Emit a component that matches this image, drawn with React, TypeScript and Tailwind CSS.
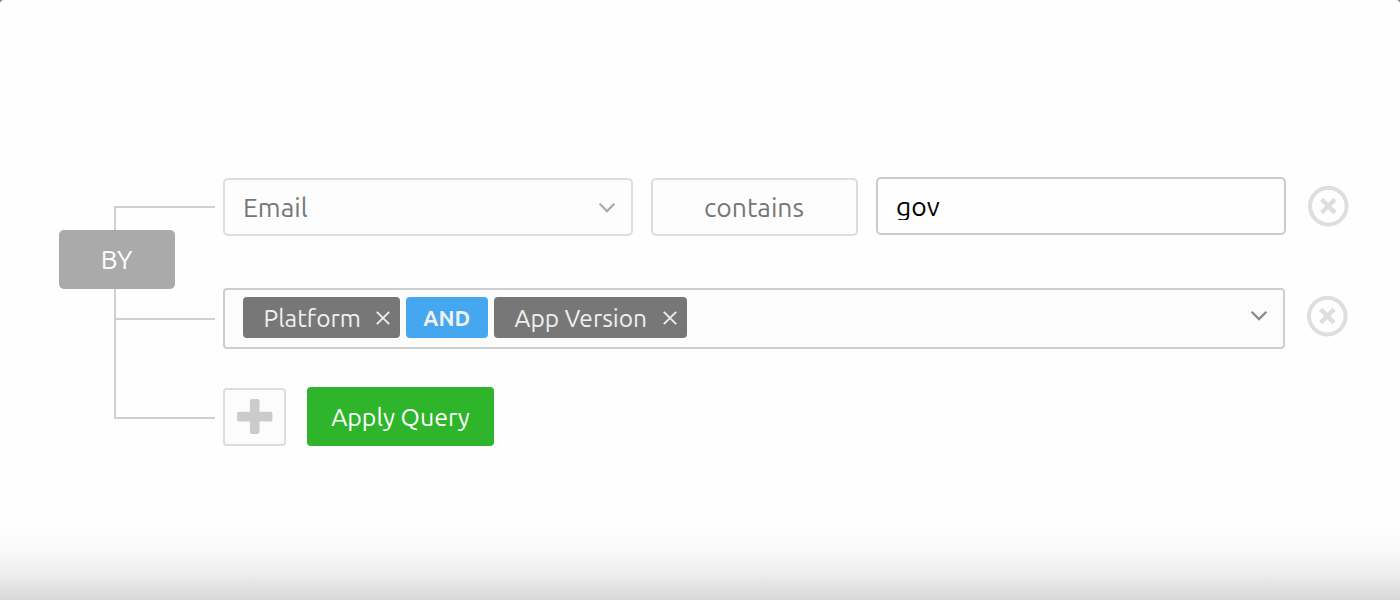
import { ReactNode } from "react";

function Chevron({ className }: { className: string }) {
  return (
    <svg width="18" height="12" viewBox="0 0 18 12" fill="none" stroke="currentColor" strokeWidth="2.2" className={className}>
      <path d="M1.6 1.8 9 9.1 16.4 1.8" />
    </svg>
  );
}

function RemoveButton({ className }: { className: string }) {
  return (
    <button aria-label="Remove" className={`shrink-0 text-[#dedede] ${className}`}>
      <svg width="41" height="41" viewBox="0 0 41 41" fill="none" stroke="currentColor" className="block">
        <circle cx="20.3" cy="20.1" r="18.3" strokeWidth="4" />
        <path d="M13.6 13.4 27 26.8M27 13.4 13.6 26.8" strokeWidth="4.4" />
      </svg>
    </button>
  );
}

function Tag({ children, className }: { children: ReactNode; className: string }) {
  return (
    <div className={`flex h-[41px] items-center justify-between rounded-[4px] bg-[#777777] pr-[10px] pl-[20.5px] text-[24.5px] text-[#f0f0f0] ${className}`}>
      {children}
      <svg width="14" height="14" viewBox="0 0 14 14" fill="none" stroke="currentColor" strokeWidth="1.8" className="mt-px shrink-0">
        <path d="M.8.8 13.2 13.2M13.2.8.8 13.2" />
      </svg>
    </div>
  );
}

function Tree() {
  return (
    <div className="w-[223px] shrink-0 pt-[206px]">
      <div className="ml-[114px] h-[24.4px] w-[101px] border-t-2 border-l-2 border-[#d0d0d0]" />
      <div className="ml-[59px] flex h-[59px] w-[116px] items-center justify-center rounded-[5px] bg-[#aaaaaa] pr-px pb-[2px] text-white">
        <span className="text-[26.5px]">BY</span>
      </div>
      <div className="ml-[114px] h-[30.6px] w-[101px] border-b-2 border-l-2 border-[#d0d0d0]" />
      <div className="ml-[114px] h-[99px] w-[101px] border-b-2 border-l-2 border-[#d0d0d0]" />
    </div>
  );
}

export default function App() {
  return (
    <div className="h-[600px] w-[1400px] overflow-hidden bg-[#777777]">
      <div className="flex h-full rounded-t-[4px] bg-[linear-gradient(to_bottom,#fefefe_0%,#fefefe_88%,#f9f9f9_92%,#eeeeee_95.5%,#d8d8d8_100%)] font-['Ubuntu','Noto_Sans',sans-serif] text-[24.9px] leading-[34px] whitespace-nowrap">
        <Tree />
        <div className="pt-[177px]">
          <div className="flex text-[26.5px]">
            <div className="mt-px flex h-[58px] w-[410px] items-center justify-between rounded-[5px] border-2 border-[#dddddd] bg-[#fdfdfd] pr-[15px] pb-px pl-[18px] text-[#777777]">
              <span>Email</span>
              <Chevron className="mt-[2px] text-[#aaaaaa]" />
            </div>
            <div className="mt-px ml-[18px] flex h-[58px] w-[207px] items-center justify-center rounded-[5px] border-2 border-[#dddddd] bg-[#fdfdfd] pr-px pb-px text-[#777777]">
              <span>contains</span>
            </div>
            <div className="ml-[18px] h-[58px] w-[410px] rounded-[5px] border-2 border-[#cbcbcb] bg-[#fefefe] pt-[10px] pl-[18px] text-black">
              <div className="h-[31px] overflow-hidden">gov</div>
            </div>
            <RemoveButton className="mt-[9px] ml-[22px] self-start" />
          </div>
          <div className="mt-[52px] flex">
            <div className="flex h-[61px] w-[1062px] items-center rounded-[4px] border-2 border-[#cecece] bg-[#fcfcfc] pb-[2px] pl-[18px]">
              <Tag className="w-[157.4px]"><span>Platform</span></Tag>
              <div className="ml-[6px] flex h-[41px] w-[81.6px] items-center justify-center rounded-[4px] bg-[#44a7ef] pt-px pr-px text-[21.5px] font-bold text-[#f0f0f0]">
                AND
              </div>
              <Tag className="ml-[6px] w-[193px]"><span>App Version</span></Tag>
              <Chevron className="mr-[15px] mb-[3px] ml-auto text-[#888888]" />
            </div>
            <RemoveButton className="mt-[8px] ml-[22px] self-start" />
          </div>
          <div className="mt-[38px] flex">
            <button aria-label="Add" className="mt-px flex h-[58px] w-[63px] justify-center rounded-[4px] border-2 border-[#dddddd] bg-[#fcfcfc] pt-[9px]">
              <svg width="36" height="36" viewBox="0 0 36 36" fill="#cbcbcb" className="block">
                <rect x="12.9" y="0" width="9.6" height="35" rx="2" />
                <rect x="0" y="12.8" width="35.4" height="9.6" rx="2" />
              </svg>
            </button>
            <button className="ml-[21px] flex h-[59px] w-[187px] items-center justify-center rounded-[4px] bg-[#2eb52c] text-white">
              <span>Apply Query</span>
            </button>
          </div>
        </div>
      </div>
    </div>
  );
}
